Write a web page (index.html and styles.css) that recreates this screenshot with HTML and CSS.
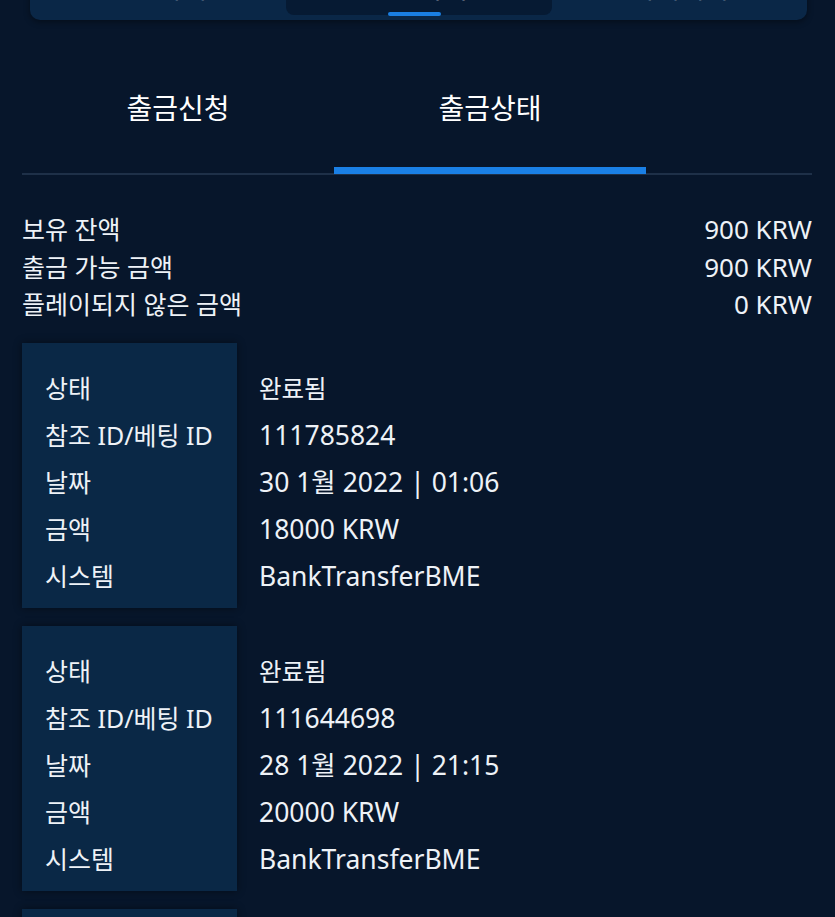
FILE: index.html
```html
<!DOCTYPE html>
<html lang="ko">
<head>
    <meta charset="UTF-8">
    <meta name="viewport" content="width=device-width, initial-scale=1.0">
    <title>출금상태</title>
    <link rel="stylesheet" href="styles.css">
</head>
<body>
    <nav class="top-switch">
        <div class="switch-item">입금하기</div>
        <div class="switch-item active">출금하기</div>
        <div class="switch-item">거래내역</div>
    </nav>

    <div class="tabs">
        <div class="tab">출금신청</div>
        <div class="tab active">출금상태</div>
        <div class="tab-spacer"></div>
    </div>

    <div class="summary">
        <div class="summary-row">
            <span class="summary-label">보유 잔액</span>
            <span class="summary-value">900 KRW</span>
        </div>
        <div class="summary-row">
            <span class="summary-label">출금 가능 금액</span>
            <span class="summary-value">900 KRW</span>
        </div>
        <div class="summary-row">
            <span class="summary-label">플레이되지 않은 금액</span>
            <span class="summary-value">0 KRW</span>
        </div>
    </div>

    <div class="history">
        <div class="card">
            <div class="card-labels">
                <div>상태</div>
                <div>참조 ID/베팅 ID</div>
                <div>날짜</div>
                <div>금액</div>
                <div>시스템</div>
            </div>
            <div class="card-values">
                <div class="ko">완료됨</div>
                <div>111785824</div>
                <div>30 1월 2022 | 01:06</div>
                <div>18000 KRW</div>
                <div>BankTransferBME</div>
            </div>
        </div>

        <div class="card">
            <div class="card-labels">
                <div>상태</div>
                <div>참조 ID/베팅 ID</div>
                <div>날짜</div>
                <div>금액</div>
                <div>시스템</div>
            </div>
            <div class="card-values">
                <div class="ko">완료됨</div>
                <div>111644698</div>
                <div>28 1월 2022 | 21:15</div>
                <div>20000 KRW</div>
                <div>BankTransferBME</div>
            </div>
        </div>

        <div class="card">
            <div class="card-labels">
                <div>상태</div>
                <div>참조 ID/베팅 ID</div>
                <div>날짜</div>
                <div>금액</div>
                <div>시스템</div>
            </div>
            <div class="card-values">
                <div class="ko">완료됨</div>
                <div>111502317</div>
                <div>26 1월 2022 | 18:42</div>
                <div>15000 KRW</div>
                <div>BankTransferBME</div>
            </div>
        </div>
    </div>
</body>
</html>
```

FILE: styles.css
```css
* {
    margin: 0;
    padding: 0;
    box-sizing: border-box;
}

body {
    background: #07162b;
    color: #eef2f7;
    font-family: 'Noto Sans', 'Noto Sans CJK KR', sans-serif;
    overflow: hidden;
}

/* top switch, mostly scrolled out of view */
.top-switch {
    display: flex;
    margin: -40px 28px 0 30px;
    height: 60px;
    background: #0a2747;
    border-radius: 10px;
    box-shadow: 0 2px 6px rgba(0, 0, 0, 0.4);
}

.switch-item {
    flex: 1;
    position: relative;
    padding-top: 14px;
    font-size: 27px;
    line-height: 27px;
    text-align: center;
    color: #c9d3df;
}

.switch-item.active {
    flex: 0 0 266px;
    height: 55px;
    background: #061a33;
    border-radius: 0 0 8px 8px;
    color: #ffffff;
}

.switch-item.active::after {
    content: '';
    position: absolute;
    left: 102px;
    bottom: -1px;
    width: 53px;
    height: 4px;
    border-radius: 2px;
    background: #1a7fe3;
}

/* tabs */
.tabs {
    display: flex;
    margin: 48px 23px 0 22px;
    border-bottom: 2px solid #1e3048;
}

.tab {
    flex: 0 0 312px;
    padding: 22px 0 41px;
    font-size: 28px;
    line-height: 36px;
    text-align: center;
    color: #ffffff;
    border-bottom: 7px solid transparent;
    margin-bottom: -1px;
}

.tab.active {
    border-bottom-color: #1a80e6;
}

.tab-spacer {
    flex: 1;
}

/* balance summary */
.summary {
    margin: 36px 23px 0 22px;
}

.summary-row {
    display: flex;
    justify-content: space-between;
    height: 37.5px;
    line-height: 37.5px;
}

.summary-label {
    font-size: 25px;
}

.summary-value {
    font-size: 26px;
}

/* withdrawal history */
.history {
    margin: 19px 23px 0 22px;
    display: flex;
    flex-direction: column;
    gap: 18px;
}

.card {
    display: grid;
    grid-template-columns: 215px 1fr;
}

.card-labels,
.card-values {
    padding: 22px 0 8px;
}

.card-labels {
    padding-left: 23px;
    background: #0a2846;
    box-shadow: 0 0 8px rgba(0, 0, 0, 0.45);
    font-size: 25px;
}

.card-values {
    padding-left: 22px;
    font-size: 26.5px;
}

.card-labels div,
.card-values div {
    height: 47px;
    line-height: 47px;
    white-space: nowrap;
}

.card-values .ko {
    font-size: 24.5px;
}
```
